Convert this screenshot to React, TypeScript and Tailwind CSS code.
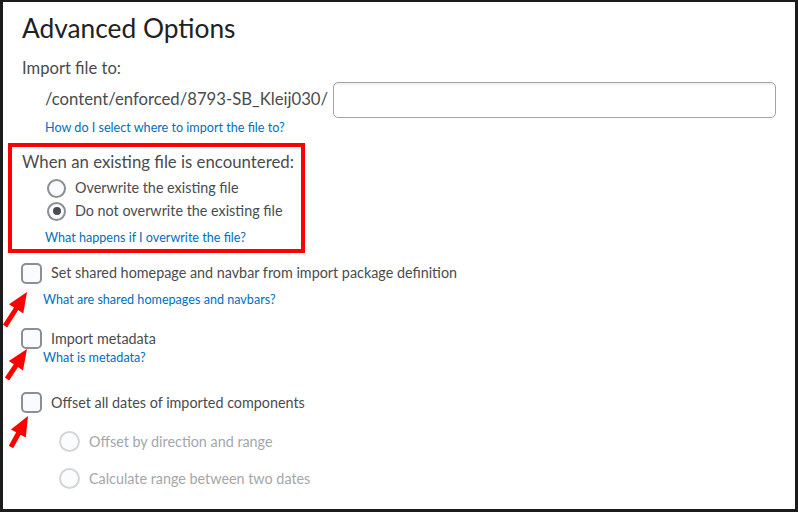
import React from "react";

type Pt = [number, number];

// red annotation arrow, drawn from tail to tip
function arrowPoints(tail: Pt, tip: Pt, headLen = 20, headHalf = 8.5, shaftHalf = 2.5) {
  const dx = tip[0] - tail[0];
  const dy = tip[1] - tail[1];
  const len = Math.hypot(dx, dy);
  const ux = dx / len;
  const uy = dy / len;
  const nx = -uy;
  const ny = ux;
  const bx = tip[0] - ux * headLen;
  const by = tip[1] - uy * headLen;
  const pts: Pt[] = [
    tip,
    [bx + nx * headHalf, by + ny * headHalf],
    [bx + nx * shaftHalf, by + ny * shaftHalf],
    [tail[0] + nx * shaftHalf, tail[1] + ny * shaftHalf],
    [tail[0] - nx * shaftHalf, tail[1] - ny * shaftHalf],
    [bx - nx * shaftHalf, by - ny * shaftHalf],
    [bx - nx * headHalf, by - ny * headHalf],
  ];
  return pts.map((p) => p.map((v) => v.toFixed(1)).join(",")).join(" ");
}

const arrows: [Pt, Pt][] = [
  [[5, 326], [27, 292]],
  [[7, 379], [27, 349]],
  [[11, 447], [28, 416]],
];

const linkClass = "text-[12.6px] leading-4 text-[#006fbf]";
const bodyClass = "text-[14.35px] text-[#494c4e]";

function Checkbox() {
  return <span className="w-[21px] h-[21px] shrink-0 rounded-[5px] border-2 border-[#8a8f93] bg-[#f9fbff]" />;
}

function Radio({ checked = false, disabled = false }: { checked?: boolean; disabled?: boolean }) {
  return (
    <span
      className={`shrink-0 rounded-full border-2 flex items-center justify-center ${
        disabled ? "w-[21px] h-[21px] border-[#d3d6d9] bg-[#fbfcfd]" : "w-[19px] h-[19px] border-[#8a8f93] bg-[#f9fbff]"
      }`}
    >
      {checked && <span className="w-[8px] h-[8px] rounded-full bg-[#494c4e]" />}
    </span>
  );
}

export default function App() {
  return (
    <div
      className="relative w-[798px] h-[512px] overflow-hidden bg-white border-[3px] border-t-2 border-[#1c1c1c] text-[#494c4e]"
      style={{ fontFamily: "Lato, 'Open Sans', sans-serif" }}
    >
      <h1 className="mt-[8px] pl-[19px] text-[26.3px] leading-[36px] text-[#202122]">Advanced Options</h1>

      <p className="mt-[10px] pl-[19px] text-[16.6px] leading-6">Import file to:</p>

      <div className="mt-[2px] pl-[42px] flex items-center">
        <span className="text-[16.7px]">/content/enforced/8793-SB_Kleij030/</span>
        <input className="ml-[5px] w-[443px] h-[36px] rounded-[5px] border border-[#a0a4a8] bg-white shadow-[inset_0_2px_0_0_#f1f3f5] outline-none" />
      </div>

      <p className={`mt-[2px] pl-[42px] ${linkClass}`}>How do I select where to import the file to?</p>

      <div className="mt-[7px] ml-[5px] w-[297px] h-[110px] border-4 border-[#ff0000] pl-[10px]">
        <p className="mt-[4px] text-[16.8px] leading-[22px]">When an existing file is encountered:</p>
        <div className="mt-[4px] pl-[25px] h-[22px] flex items-center gap-[9px]">
          <Radio />
          <span className={bodyClass}>Overwrite the existing file</span>
        </div>
        <div className="mt-[1px] pl-[25px] h-[22px] flex items-center gap-[9px]">
          <Radio checked />
          <span className={bodyClass}>Do not overwrite the existing file</span>
        </div>
        <p className={`mt-[8px] pl-[23px] ${linkClass}`}>What happens if I overwrite the file?</p>
      </div>

      <div className="mt-[9px] pl-[18px] h-[22px] flex items-center gap-[9px]">
        <Checkbox />
        <span className={bodyClass}>Set shared homepage and navbar from import package definition</span>
      </div>
      <p className={`mt-[8px] pl-[40px] ${linkClass}`}>What are shared homepages and navbars?</p>

      <div className="mt-[20px] pl-[18px] h-[21px] flex items-center gap-[9px]">
        <Checkbox />
        <span className={bodyClass}>Import metadata</span>
      </div>
      <p className={`mt-[1px] pl-[40px] ${linkClass}`}>What is metadata?</p>

      <div className="mt-[26px] pl-[18px] h-[21px] flex items-center gap-[9px]">
        <Checkbox />
        <span className={bodyClass}>Offset all dates of imported components</span>
      </div>

      <div className="mt-[18px] pl-[56px] h-[21px] flex items-center gap-[9px]">
        <Radio disabled />
        <span className="text-[14.35px] text-[#a3a7aa]">Offset by direction and range</span>
      </div>
      <div className="mt-[16px] pl-[56px] h-[21px] flex items-center gap-[9px]">
        <Radio disabled />
        <span className="text-[14.35px] text-[#a3a7aa]">Calculate range between two dates</span>
      </div>

      <svg className="absolute -left-[3px] -top-[2px] pointer-events-none" width="798" height="512">
        {arrows.map(([tail, tip], i) => (
          <polygon key={i} points={arrowPoints(tail, tip)} fill="#ff0000" />
        ))}
      </svg>
    </div>
  );
}
